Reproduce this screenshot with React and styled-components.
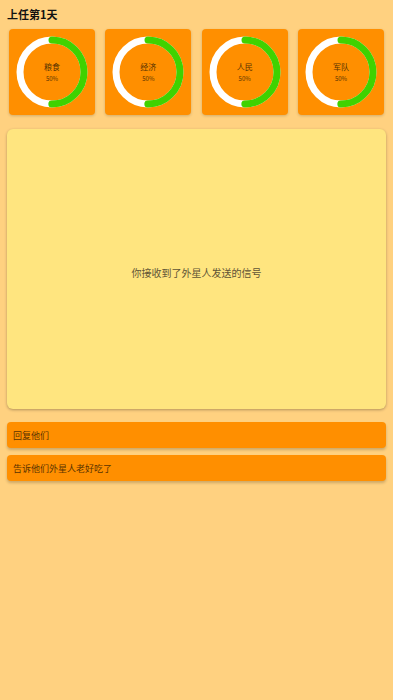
import React from "react";
import styled, { createGlobalStyle } from "styled-components";

const GlobalStyle = createGlobalStyle`
  html, body {
    margin: 0;
    padding: 0;
    background: #ffd180;
    font-family: "Noto Sans CJK SC", "Noto Sans", sans-serif;
  }
`;

const Page = styled.div`
  min-height: 700px;
  background: #ffd180;
  padding: 6px 7px 0 7px;
  box-sizing: border-box;
`;

const Title = styled.h1`
  margin: 0;
  font-size: 11px;
  line-height: 16px;
  font-weight: 700;
  color: #111;
`;

const StatRow = styled.div`
  display: grid;
  grid-template-columns: repeat(4, 86px);
  justify-content: space-between;
  padding: 0 2px;
  margin-top: 7px;
`;

const StatCard = styled.div`
  height: 86px;
  background: #ff8f00;
  border-radius: 4px;
  box-shadow: 0 1px 3px rgba(0, 0, 0, 0.18);
  display: flex;
  align-items: center;
  justify-content: center;
`;

const Ring = styled.div`
  position: relative;
  width: 72px;
  height: 72px;
`;

const RingText = styled.div`
  position: absolute;
  inset: 0;
  display: flex;
  flex-direction: column;
  align-items: center;
  justify-content: center;
  color: #5a3300;
`;

const Label = styled.span`
  font-size: 8px;
  line-height: 11px;
`;

const Percent = styled.span`
  font-size: 6px;
  line-height: 9px;
  margin-top: 2px;
`;

const Panel = styled.div`
  margin-top: 14px;
  height: 280px;
  box-sizing: border-box;
  padding-top: 6px;
  background: #ffe57f;
  border-radius: 6px;
  box-shadow: 0 1px 3px rgba(0, 0, 0, 0.3);
  display: flex;
  align-items: center;
  justify-content: center;
  font-size: 10px;
  color: #5f5436;
`;

const Choices = styled.div`
  margin-top: 13px;
  display: flex;
  flex-direction: column;
  gap: 7px;
`;

const Choice = styled.button`
  height: 26px;
  border: none;
  border-radius: 4px;
  background: #ff8f00;
  box-shadow: 0 2px 3px rgba(0, 0, 0, 0.2);
  text-align: left;
  padding: 0 6px;
  font-family: inherit;
  font-size: 9px;
  color: #5a3300;
`;

function Gauge({ label, value }) {
  const r = 32;
  const c = 2 * Math.PI * r;
  return (
    <StatCard>
      <Ring>
        <svg width="72" height="72" viewBox="0 0 72 72">
          <circle cx="36" cy="36" r={r} fill="none" stroke="#fff" strokeWidth="7" />
          <circle
            cx="36"
            cy="36"
            r={r}
            fill="none"
            stroke="#3fd200"
            strokeWidth="7"
            strokeLinecap="round"
            strokeDasharray={`${(c * value) / 100} ${c}`}
            transform="rotate(-90 36 36)"
          />
        </svg>
        <RingText>
          <Label>{label}</Label>
          <Percent>{value}%</Percent>
        </RingText>
      </Ring>
    </StatCard>
  );
}

const stats = [
  { label: "粮食", value: 50 },
  { label: "经济", value: 50 },
  { label: "人民", value: 50 },
  { label: "军队", value: 50 },
];

export default function App() {
  return (
    <Page>
      <GlobalStyle />
      <Title>上任第1天</Title>
      <StatRow>
        {stats.map((s) => (
          <Gauge key={s.label} {...s} />
        ))}
      </StatRow>
      <Panel>你接收到了外星人发送的信号</Panel>
      <Choices>
        <Choice>回复他们</Choice>
        <Choice>告诉他们外星人老好吃了</Choice>
      </Choices>
    </Page>
  );
}
